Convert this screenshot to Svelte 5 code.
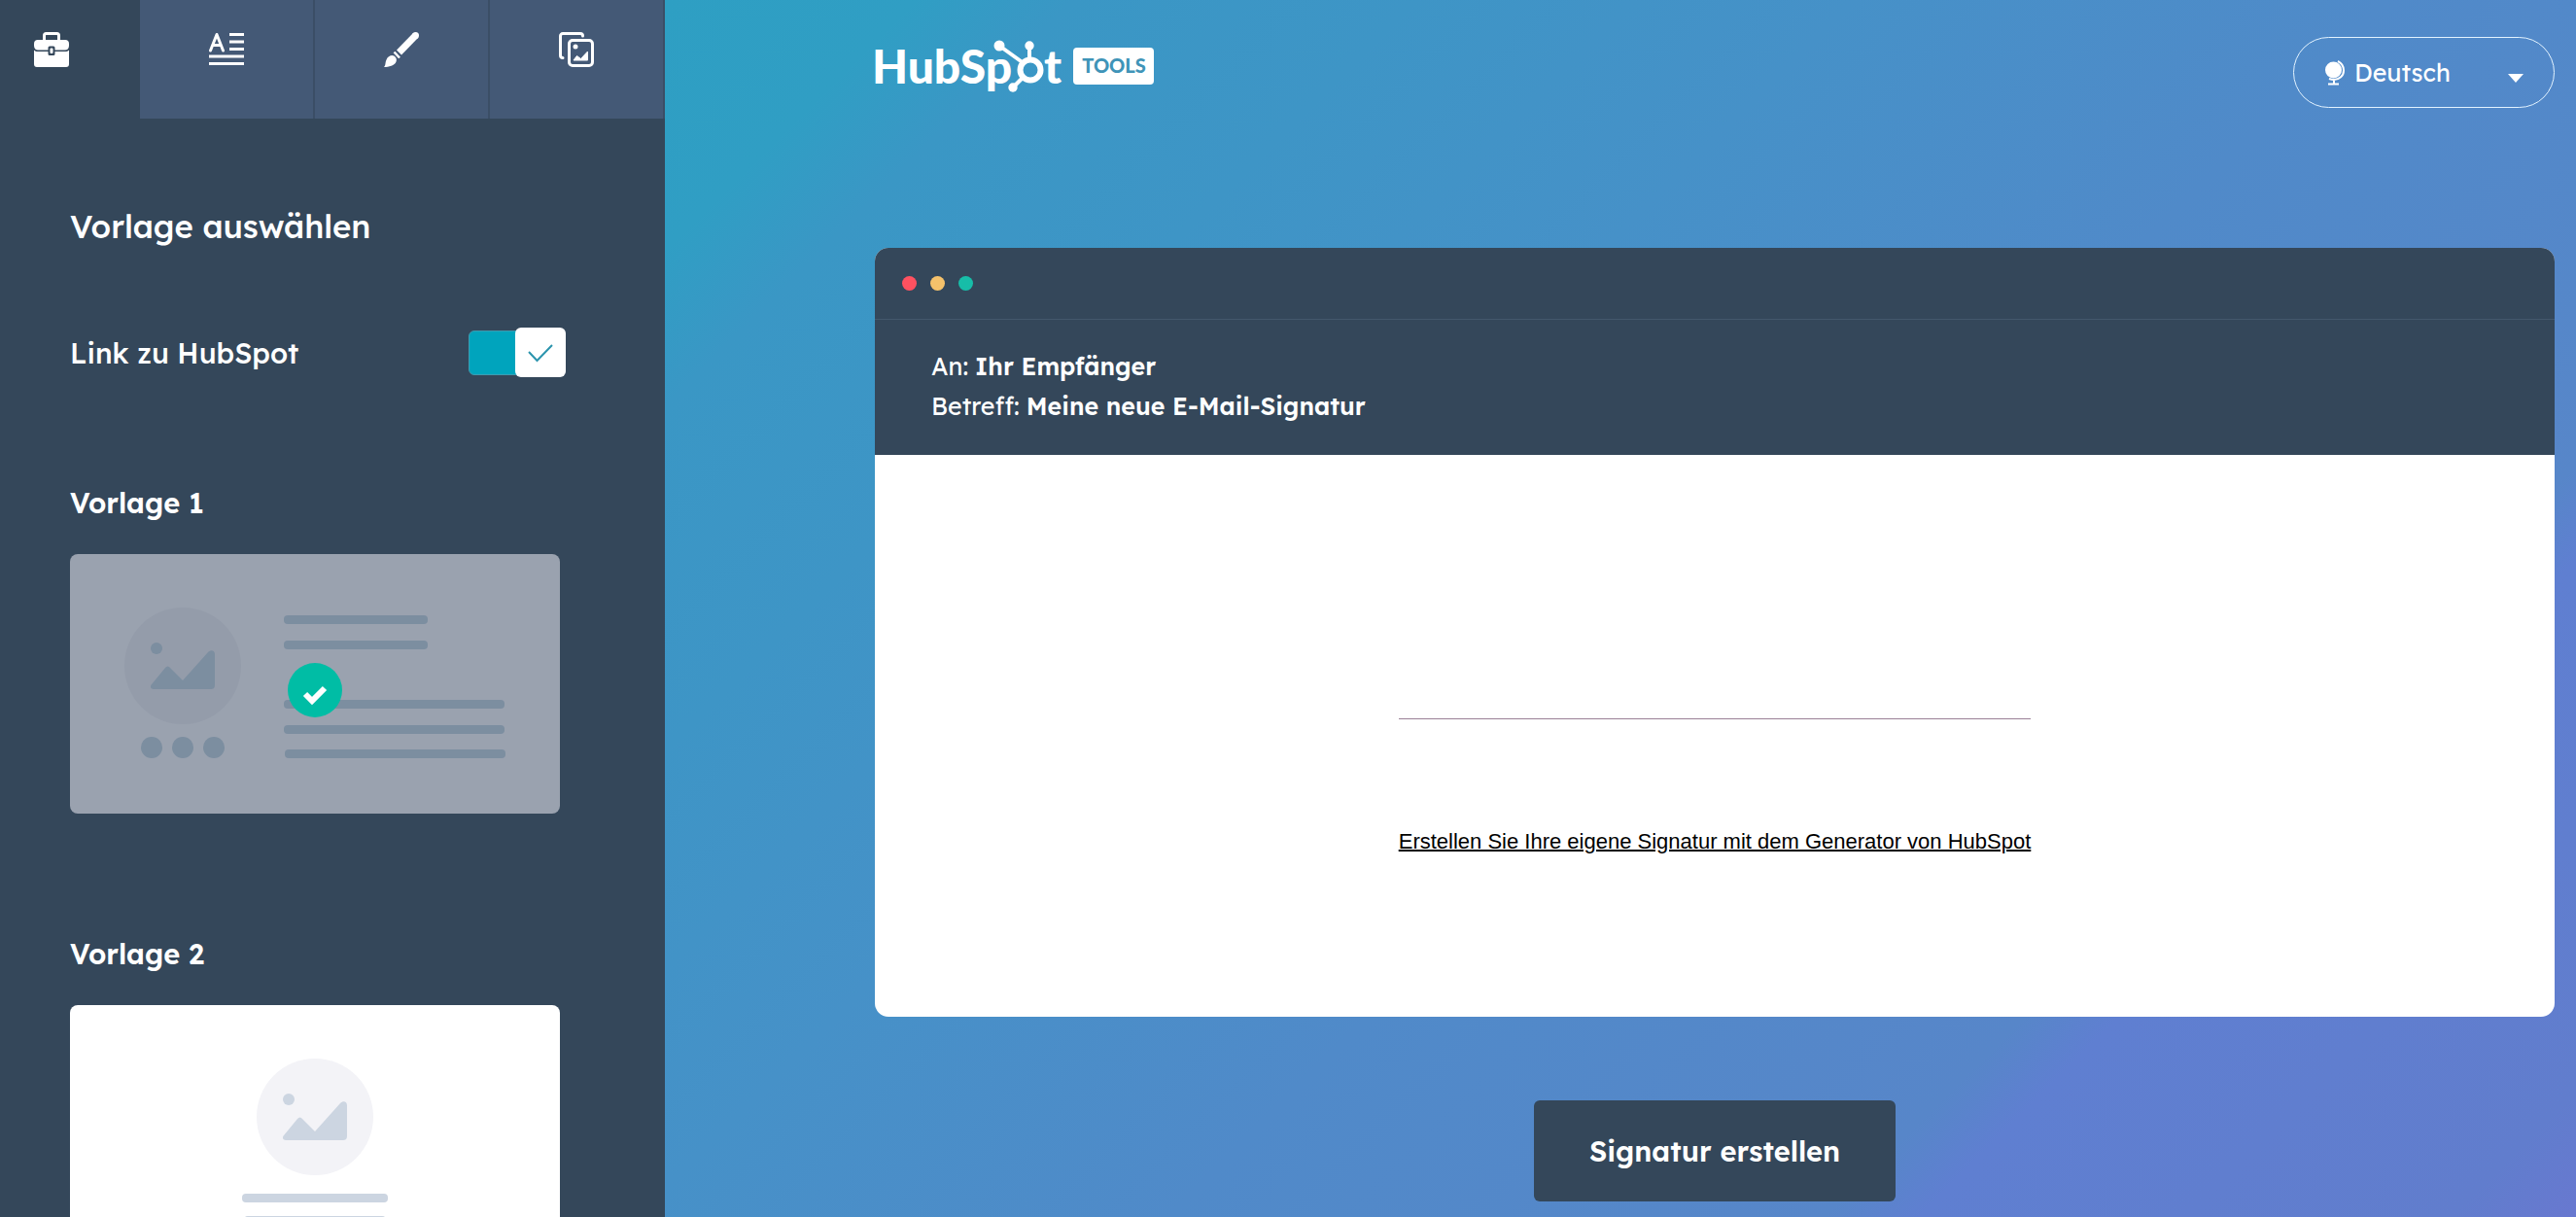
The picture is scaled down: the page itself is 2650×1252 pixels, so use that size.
<script lang="ts">
	let activeTab = $state("templates");
	let linkToHubSpot = $state(true);
	let selected = $state(1);
	let language = $state("de");

	const tabs = [
		{ id: "templates", label: "Vorlagen" },
		{ id: "details", label: "Details" },
		{ id: "style", label: "Stil" },
		{ id: "images", label: "Bilder" },
	];

	const templates = [
		{
			id: 1,
			avatarX: 116,
			dots: [84, 116, 148],
			lines: [
				{ x: 220, y: 63, width: 148 },
				{ x: 220, y: 89, width: 148 },
				{ x: 220, y: 150, width: 227 },
				{ x: 220, y: 176, width: 227 },
				{ x: 221, y: 201, width: 227 },
			],
		},
		{
			id: 2,
			avatarX: 252,
			dots: [],
			lines: [
				{ x: 177, y: 194, width: 150 },
				{ x: 179, y: 217, width: 146 },
			],
		},
	];
</script>

<div class="app">
	<aside class="sidebar">
		<nav class="tabs">
			{#each tabs as tab}
				<button
					class="tab"
					class:active={activeTab === tab.id}
					aria-label={tab.label}
					onclick={() => (activeTab = tab.id)}
				>
					<svg viewBox="0 0 36 36" fill="none">
						{#if tab.id === "templates"}
							<path d="M10.500 9V3.500a2 2 0 0 1 2-2h11a2 2 0 0 1 2 2V9" stroke="#fff" stroke-width="3" />
							<path
								d="M4 8h28a4 4 0 0 1 4 4v2c0 3-2 4.500-4 4.500H21.500V16a1.500 1.500 0 0 0-1.500-1.500h-4a1.500 1.500 0 0 0-1.500 1.500v2.500H4c-2 0-4-1.500-4-4.500v-2a4 4 0 0 1 4-4Z"
								fill="#fff"
							/>
							<path
								d="M0 18.500c1 1 2.500 1.500 4 1.500h10.500v2.500A1.500 1.500 0 0 0 16 24h4a1.500 1.500 0 0 0 1.500-1.500V20H32c1.500 0 3-.5 4-1.500V33a3 3 0 0 1-3 3H3a3 3 0 0 1-3-3Z"
								fill="#fff"
							/>
							<rect x="15" y="15" width="6" height="8.500" rx="1.500" fill="#34475a" />
							<rect x="16.500" y="16.500" width="3" height="5.500" rx="1" fill="#fff" />
						{:else if tab.id === "details"}
							<path d="M1.500 19 8 2.500 14.500 19M4 13.500h8" stroke="#fff" stroke-width="3" stroke-linecap="round" stroke-linejoin="round" />
							<path d="M21 2.500h15M21 10h15M21 17.500h15M0 25h36M0 32.500h36" stroke="#fff" stroke-width="3" />
						{:else if tab.id === "style"}
							<path d="M32.500 3.500 15.500 21" stroke="#fff" stroke-width="7" />
							<circle cx="32.500" cy="3.500" r="3.500" fill="#fff" />
							<path d="m10.500 20.500 5.500 6" stroke="#fff" stroke-width="2.500" />
							<path d="M8.500 24c2.500 0 5.500 3 4 6.500C11 34.500 5 36 0 36c2-2 1-4 2.500-7.500C3.500 25.500 6 24 8.500 24Z" fill="#fff" />
						{:else}
							<path d="M4 26.500a2.500 2.500 0 0 1-2.500-2.500V4A2.500 2.500 0 0 1 4 1.500h18A2.500 2.500 0 0 1 24.500 4" stroke="#fff" stroke-width="3" stroke-linecap="round" />
							<rect x="10.500" y="8.500" width="24" height="26" rx="3.500" stroke="#fff" stroke-width="3" />
							<circle cx="17" cy="15" r="2.500" fill="#fff" />
							<path d="m15 29 3.500-4.500 4 3 7-7.500v9Z" fill="#fff" stroke="#fff" stroke-linejoin="round" />
						{/if}
					</svg>
				</button>
			{/each}
		</nav>

		<div class="panel">
			<h1>Vorlage auswählen</h1>

			<label class="link-row">
				<span>Link zu HubSpot</span>
				<span class="toggle">
					<input type="checkbox" bind:checked={linkToHubSpot} />
					<span class="knob">
						<svg viewBox="0 0 26 20" fill="none">
							<path d="m1 9 8.500 9L25 2" stroke="#2b94ad" stroke-width="2" />
						</svg>
					</span>
				</span>
			</label>

			{#each templates as template}
				<section class="template" class:selected={selected === template.id}>
					<h2>Vorlage {template.id}</h2>
					<button
						class="card"
						aria-label="Vorlage {template.id} auswählen"
						onclick={() => (selected = template.id)}
					>
						<svg viewBox="0 0 504 267">
							<circle class="avatar" cx={template.avatarX} cy="115" r="60" />
							<g class="shape">
								<circle cx={template.avatarX - 27} cy="97" r="6" />
								<path
									transform="translate({template.avatarX} 115)"
									d="M-30 24c-3 0-4-3-2-5l14-17c1.500-2 3.500-2 5 0L0 15l26-29c3-3 7-2 7 2v32c0 3-2 4-4 4Z"
								/>
								{#each template.dots as x}
									<circle cx={x} cy="199" r="11" />
								{/each}
								{#each template.lines as line}
									<rect x={line.x} y={line.y} width={line.width} height="9" rx="4" />
								{/each}
							</g>
							{#if selected === template.id}
								<circle cx="252" cy="140" r="28" fill="#00bda5" />
								<path d="m242 144 7 7 13-13" fill="none" stroke="#fff" stroke-width="6" />
							{/if}
						</svg>
					</button>
				</section>
			{/each}
		</div>
	</aside>

	<main>
		<header>
			<a class="logo" href="/" aria-label="HubSpot Tools">
				<svg viewBox="0 0 290 60">
					<g class="wordmark">
						<text x="-3" y="48">HubSp</text>
						<text x="174" y="48">t</text>
					</g>
					<g fill="none" stroke="#fff">
						<circle cx="160" cy="34" r="10.500" stroke-width="6" />
						<path d="M159 9v16" stroke-width="4" />
						<path d="m128 9 25 18M142 52l10-10" stroke-width="4" />
					</g>
					<g fill="#fff">
						<circle cx="159" cy="9" r="4.700" />
						<circle cx="128" cy="9" r="5.500" />
						<circle cx="142" cy="52" r="4.700" />
						<rect x="204" y="11" width="83" height="38" rx="4" />
					</g>
					<text class="badge" x="246" y="37" text-anchor="middle">TOOLS</text>
				</svg>
			</a>

			<div class="language">
				<svg class="globe" viewBox="0 0 20 26" fill="none">
					<circle cx="8.500" cy="10" r="8.500" fill="#fff" />
					<path d="M13 1c4 2 6 5 6 9.500C19 16 14.500 20 9 20c-2 0-3.500-.5-5-1M9 20v4M3 24.500h11" stroke="#fff" stroke-width="2" />
				</svg>
				<select bind:value={language} aria-label="Sprache">
					<option value="de">Deutsch</option>
					<option value="en">English</option>
					<option value="fr">Français</option>
				</select>
				<svg class="caret" viewBox="0 0 16 9"><path d="M0 0h16L8 9Z" fill="#fff" /></svg>
			</div>
		</header>

		<div class="window">
			<div class="title-bar">
				<span class="dot red"></span>
				<span class="dot yellow"></span>
				<span class="dot green"></span>
			</div>
			<div class="mail-head">
				<p>An: <strong>Ihr Empfänger</strong></p>
				<p>Betreff: <strong>Meine neue E-Mail-Signatur</strong></p>
			</div>
			<div class="mail-body">
				<div class="signature">
					<hr />
					<a href="/email-signature">Erstellen Sie Ihre eigene Signatur mit dem Generator von HubSpot</a>
				</div>
			</div>
		</div>

		<button class="create">Signatur erstellen</button>
	</main>
</div>

<style>
	:global(body) {
		margin: 0;
	}

	.app {
		display: flex;
		height: 100vh;
		overflow: hidden;
		font-family: "Lexend Deca", Inter, sans-serif;
		color: #fff;
	}

	button,
	select {
		font-family: inherit;
		color: inherit;
		border: none;
		cursor: pointer;
	}

	.sidebar {
		flex: 0 0 684px;
		background: #34475a;
		overflow-y: auto;
		scrollbar-width: none;
	}

	.tabs {
		display: flex;
		justify-content: flex-end;
		overflow: hidden;
	}

	.tab {
		flex: 0 0 180px;
		box-sizing: border-box;
		height: 122px;
		padding: 0 0 20px;
		display: flex;
		align-items: center;
		justify-content: center;
		background: #445976;
		border-right: 2px solid #3b4e66;
	}

	.tab.active {
		background: #34475a;
		border-right-color: #34475a;
	}

	.tab svg {
		width: 36px;
		height: 36px;
	}

	.panel {
		padding: 91px 108px 0 72px;
	}

	h1 {
		margin: 0;
		font-size: 33px;
		font-weight: 500;
		line-height: 40px;
	}

	h2 {
		margin: 0 0 35px;
		font-size: 29px;
		font-weight: 600;
		line-height: 36px;
	}

	.link-row {
		display: flex;
		align-items: center;
		justify-content: space-between;
		margin: 84px -6px 111px 0;
		font-size: 29px;
		font-weight: 500;
		line-height: 36px;
		cursor: pointer;
	}

	.toggle {
		position: relative;
		display: flex;
		align-items: center;
		width: 100px;
		height: 51px;
	}

	.toggle input {
		appearance: none;
		width: 100%;
		height: 46px;
		margin: 0;
		border: 1px solid #3e9bb0;
		border-radius: 6px;
		background: #7c98b6;
		cursor: pointer;
	}

	.toggle input:checked {
		background: #00a4bd;
	}

	.knob {
		position: absolute;
		left: 0;
		display: flex;
		align-items: center;
		justify-content: center;
		width: 52px;
		height: 51px;
		border-radius: 6px;
		background: #fff;
	}

	.toggle input:checked + .knob {
		left: auto;
		right: 0;
	}

	.knob svg {
		width: 26px;
		height: 20px;
	}

	.template {
		margin-bottom: 126px;
	}

	.card {
		display: block;
		width: 100%;
		padding: 0;
		border-radius: 8px;
		background: #fff;
		overflow: hidden;
	}

	.card svg {
		display: block;
		width: 100%;
	}

	.avatar {
		fill: #f3f3f7;
	}

	.shape {
		fill: #ccd5e1;
	}

	.selected .card {
		background: #9aa2af;
	}

	.selected .avatar {
		fill: #949caa;
	}

	.selected .shape {
		fill: #7c8ea0;
	}

	main {
		flex: 1;
		min-width: 0;
		display: flex;
		flex-direction: column;
		align-items: center;
		padding: 38px 22px 16px 216px;
		background: linear-gradient(
			135deg,
			#2e9fc3 0%,
			#309ec4 8%,
			#3a97c5 13%,
			#3e95c6 24%,
			#4691c8 38%,
			#508ac9 55%,
			#5786c9 76%,
			#5f7fd1 79%,
			#617dcd 96%,
			#6878d0 100%
		);
	}

	header {
		display: flex;
		align-items: flex-start;
		justify-content: space-between;
		align-self: stretch;
		margin-bottom: 144px;
	}

	.logo svg {
		display: block;
		width: 290px;
		height: 60px;
		overflow: visible;
	}

	.wordmark {
		font-family: Lato, sans-serif;
		font-size: 48px;
		font-weight: 900;
		fill: #fff;
	}

	.badge {
		font-family: Lato, sans-serif;
		font-size: 20px;
		font-weight: 900;
		fill: #3f94b8;
	}

	.language {
		position: relative;
	}

	.language select {
		appearance: none;
		width: 269px;
		height: 73px;
		padding: 0 62px;
		border: 1px solid #e3f3ff;
		border-radius: 37px;
		background: transparent;
		font-size: 25px;
		font-weight: 400;
	}

	.language option {
		color: #33475b;
	}

	.globe,
	.caret {
		position: absolute;
		pointer-events: none;
	}

	.globe {
		left: 33px;
		top: 24px;
		width: 20px;
		height: 26px;
	}

	.caret {
		right: 32px;
		top: 38px;
		width: 16px;
		height: 9px;
	}

	.window {
		align-self: stretch;
		border-radius: 14px;
		overflow: hidden;
		background: #fff;
	}

	.title-bar {
		display: flex;
		align-items: center;
		gap: 14px;
		height: 73px;
		padding: 0 28px;
		background: #34475a;
		border-bottom: 1px solid #44586c;
	}

	.dot {
		width: 15px;
		height: 15px;
		border-radius: 50%;
	}

	.red {
		background: #ff5160;
	}

	.yellow {
		background: #f5c26b;
	}

	.green {
		background: #17bda8;
	}

	.mail-head {
		padding: 27px 58px 30px;
		background: #34475a;
		font-size: 25px;
		line-height: 41px;
	}

	.mail-head p {
		margin: 0;
	}

	.mail-head strong {
		font-weight: 600;
	}

	.mail-body {
		display: flex;
		justify-content: center;
		padding: 271px 58px 166px;
	}

	.signature {
		display: flex;
		flex-direction: column;
		font-family: "Liberation Sans", Arial, sans-serif;
		font-size: 22px;
	}

	.signature hr {
		align-self: stretch;
		height: 1px;
		margin: 0 0 112px;
		border: none;
		background: #9a8096;
	}

	.signature a {
		color: #000;
		line-height: 28px;
		text-decoration-thickness: 2px;
	}

	.create {
		margin-top: 86px;
		padding: 34px 57px;
		border-radius: 6px;
		background: #34475a;
		font-size: 29px;
		font-weight: 600;
		line-height: 36px;
	}
</style>
